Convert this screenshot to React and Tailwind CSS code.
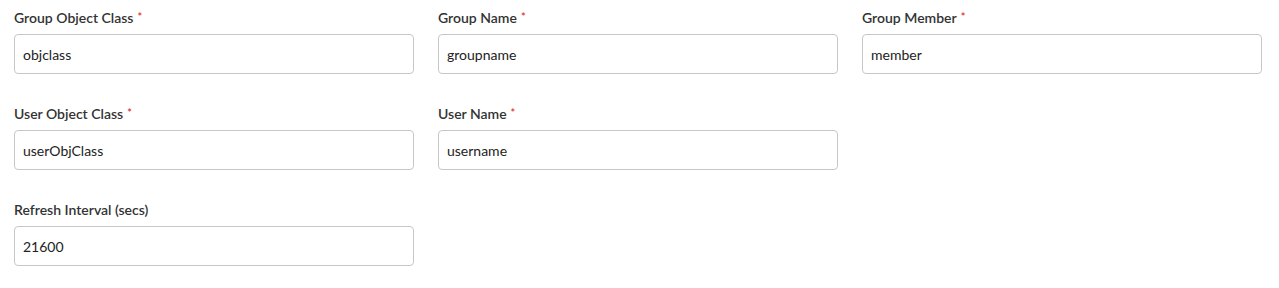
import React from 'react';

const fields = [
  [
    { label: 'Group Object Class', value: 'objclass', required: true },
    { label: 'Group Name', value: 'groupname', required: true },
    { label: 'Group Member', value: 'member', required: true },
  ],
  [
    { label: 'User Object Class', value: 'userObjClass', required: true },
    { label: 'User Name', value: 'username', required: true },
  ],
  [{ label: 'Refresh Interval (secs)', value: '21600', required: false }],
];

function Field({ label, value, required }) {
  return (
    <div className="flex flex-col">
      <label className="h-5 flex items-center text-sm font-semibold text-[#333]">
        {label}
        {required && <span className="ml-1 text-[11px] text-[#e02d2d] -mt-0.5">*</span>}
      </label>
      <input
        readOnly
        value={value}
        className="mt-[6px] h-10 w-[400px] rounded border border-[#c7c7c7] bg-white px-2 text-sm text-[#222] outline-none"
      />
    </div>
  );
}

export default function App() {
  return (
    <div className="min-h-[288px] bg-white px-[14px] pt-2 font-['Lato','Liberation_Sans',sans-serif]">
      <div className="flex flex-col gap-[30px]">
        {fields.map((row, i) => (
          <div key={i} className="flex gap-6">
            {row.map((f) => (
              <Field key={f.label} {...f} />
            ))}
          </div>
        ))}
      </div>
    </div>
  );
}
